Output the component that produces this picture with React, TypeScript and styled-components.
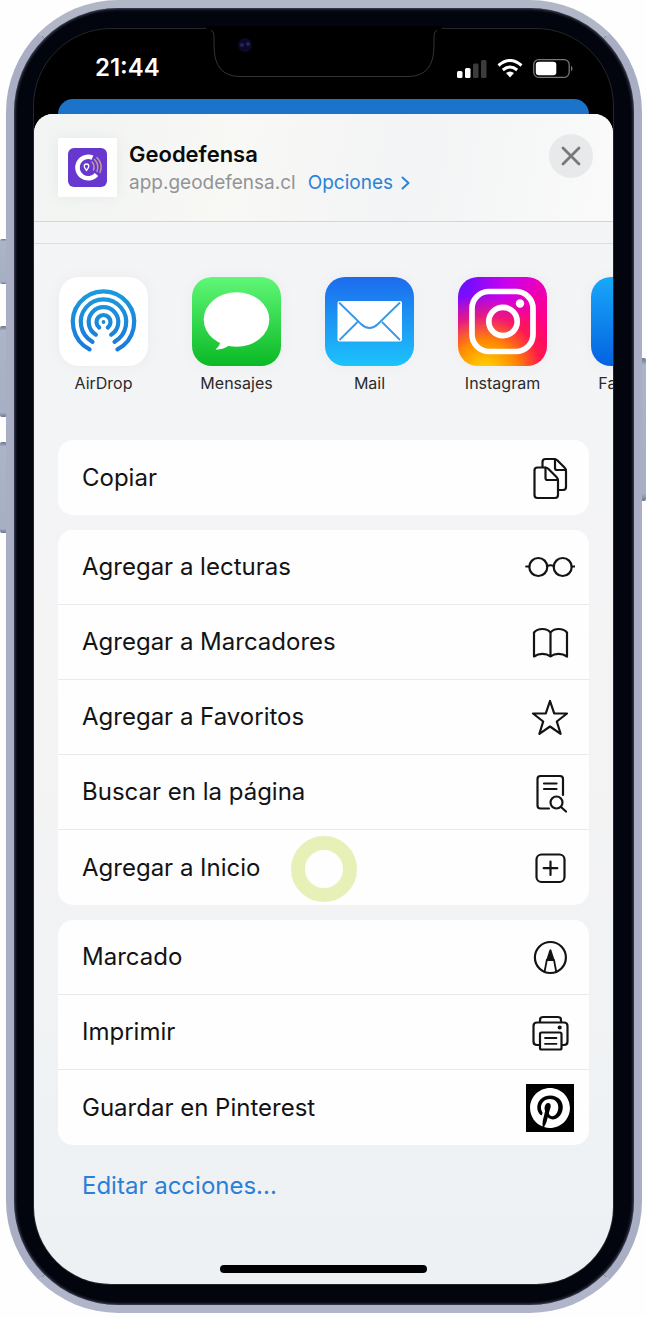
import React from 'react';
import styled, { createGlobalStyle } from 'styled-components';

const GlobalStyle = createGlobalStyle`
  *, *::before, *::after { box-sizing: border-box; }
  body {
    margin: 0;
    background: #fefefe;
    font-family: Inter, "Liberation Sans", sans-serif;
    color: #131315;
  }
  button { font: inherit; color: inherit; border: 0; background: none; cursor: pointer; }
  svg { display: block; flex: none; }
`;

const Stage = styled.main`
  position: relative;
  padding: 0 4px 5px 6px;
  overflow: hidden;
`;

const SideKey = styled.span<{ $side: 'left' | 'right'; $top: number; $length: number }>`
  position: absolute;
  ${(p) => p.$side}: 0;
  top: ${(p) => p.$top}px;
  width: ${(p) => (p.$side === 'left' ? 7 : 5)}px;
  height: ${(p) => p.$length}px;
  border-radius: 2px;
  background: linear-gradient(#6d7588, #abb5c8 5%, #a6b0c4 95%, #6d7588);
`;

const Phone = styled.div`
  position: relative;
  padding: 20px 20px 20px 19px;
  border: 8px solid #a9aec4;
  border-top-color: #b2b7c7;
  border-bottom-color: #b0b5ca;
  border-radius: 112px;
  background: #02050d;
  box-shadow: inset 0 0 3px 1px #4b5064;
`;

const Screen = styled.div`
  position: relative;
  border: 1px solid #25262a;
  border-radius: 78px;
  background: #000;
  overflow: hidden;
`;

const Notch = styled.svg`
  position: absolute;
  top: 10px;
  left: 50%;
  margin-left: -124px;
`;

const StatusBar = styled.div`
  display: flex;
  align-items: center;
  justify-content: space-between;
  height: 70px;
  padding: 8px 39px 0 61px;
  color: #fff;
  font-size: 24px;
  line-height: 28px;
  font-weight: 600;
`;

const StatusIcons = styled.div`
  display: flex;
  align-items: center;
  gap: 10px;
`;

const PageBehind = styled.div`
  height: 33px;
  margin: 0 24px -18px;
  border-radius: 15px 15px 0 0;
  background: #1b74c9;
`;

const Sheet = styled.section`
  position: relative;
  border-radius: 19px 19px 0 0;
  background: linear-gradient(#f4f5f7, #f3f3f4 60%, #eff2f5 86%, #eef1f3);
  overflow: hidden;
`;

const SheetHeader = styled.header`
  display: flex;
  align-items: flex-start;
  height: 108px;
  padding: 24px 20px 0 24px;
  border-bottom: 1px solid #d3d5d8;
  background: linear-gradient(100deg, #f1f4f2, #f8f8f5 35%, #f3f4f5 65%, #f9faf9);
`;

const SiteThumb = styled.div`
  padding: 10px;
  background: #fff;
  box-shadow: 0 0 12px #e6e8e8;
`;

const SiteInfo = styled.div`
  flex: 1;
  min-width: 0;
  padding-left: 12px;
`;

const SiteTitle = styled.h1`
  margin: 2px 0 0;
  color: #0b0b0c;
  font-size: 22px;
  line-height: 28px;
  font-weight: 600;
`;

const SiteLine = styled.div`
  display: flex;
  align-items: center;
  color: #929496;
  font-size: 19px;
  line-height: 30px;
`;

const OptionsButton = styled.button`
  display: flex;
  align-items: center;
  gap: 8px;
  margin-left: 12px;
  padding: 0;
  color: #2b82d8;
`;

const CloseButton = styled.button`
  display: grid;
  place-items: center;
  width: 44px;
  height: 44px;
  margin-top: -4px;
  padding: 0;
  border-radius: 50%;
  background: #e7e9ea;
`;

const Strip = styled.div`
  height: 22px;
  border-bottom: 1px solid #dddfe1;
`;

const AppRow = styled.nav`
  display: flex;
  gap: 44px;
  height: 196px;
  padding: 33px 0 0 25px;
  overflow: hidden;
`;

const AppButton = styled.button`
  display: flex;
  flex: none;
  flex-direction: column;
  align-items: center;
  gap: 7px;
  width: 89px;
  height: 116px;
  padding: 0;
  color: #2a2b2d;
  font-size: 16px;
  line-height: 20px;
`;

const AppTile = styled.span<{ $fill: string }>`
  width: 89px;
  height: 89px;
  flex: none;
  border-radius: 20px;
  background: ${(p) => p.$fill};
  box-shadow: 0 0 14px #ebebed;
`;

const Groups = styled.div`
  display: flex;
  flex-direction: column;
  gap: 15px;
  padding: 0 24px;
`;

const Group = styled.div`
  border-radius: 15px;
  background: #fefefe;
`;

const Row = styled.button`
  position: relative;
  display: flex;
  align-items: center;
  justify-content: space-between;
  width: 100%;
  height: 75px;
  padding: 0 14px 0 24px;
  font-size: 24px;
  line-height: 32px;
  text-align: left;

  &:not(:last-child) { border-bottom: 1px solid #e9eaeb; }
`;

const TapRing = styled.span`
  position: absolute;
  left: 50%;
  top: 6px;
  width: 66px;
  height: 66px;
  margin-left: -33px;
  border: 14px solid #e7f0b7;
  border-radius: 50%;
`;

const EditButton = styled.button`
  display: block;
  margin: 25px 48px 0;
  padding: 0;
  color: #2b7fd6;
  font-size: 24px;
  line-height: 32px;
`;

const HomeBar = styled.div`
  width: 207px;
  height: 8px;
  margin: 63px auto 11px;
  border-radius: 4px;
  background: #000;
`;

const polar = (r: number, deg: number) => {
  const a = (deg * Math.PI) / 180;
  return { x: r * Math.sin(a), y: r * Math.cos(a) };
};

const ring = (r: number, deg: number) => {
  const p = polar(r, deg);
  return `M${44.5 - p.x} ${45 + p.y}A${r} ${r} 0 1 1 ${44.5 + p.x} ${45 + p.y}`;
};

const AirDropArt = () => (
  <svg width="89" height="89" viewBox="0 0 89 89" fill="none" stroke="url(#air)" strokeWidth="4.2" strokeLinecap="round">
    <defs>
      <linearGradient id="air" gradientUnits="userSpaceOnUse" x1="0" y1="13" x2="0" y2="75">
        <stop stopColor="#1c9bdd" />
        <stop offset="1" stopColor="#1b78d8" />
      </linearGradient>
    </defs>
    <path d={ring(30.7, 27)} />
    <path d={ring(22.7, 29)} />
    <path d={ring(14.8, 31)} />
    <path d={ring(7, 38)} />
    <circle cx="44.5" cy="45" r="1.9" fill="#1b88da" stroke="none" />
  </svg>
);

const MessagesArt = () => (
  <svg width="89" height="89" viewBox="0 0 89 89" fill="#fff">
    <ellipse cx="44.5" cy="42.5" rx="32.8" ry="27.3" />
    <path d="M28 62c1 4-1 7.500-4.500 10.500 6 .3 11.500-2 15-5.500z" />
  </svg>
);

const MailArt = () => (
  <svg width="89" height="89" viewBox="0 0 89 89">
    <rect x="12.500" y="24" width="64.500" height="40.500" rx="2" fill="#fff" />
    <path d="M14 25.500l22 21.500q8.500 8 17 0l22-21.500M14.500 63l18-18M75 63l-18-18" fill="none" stroke="#3b97e2" strokeWidth="1.800" />
  </svg>
);

const InstagramArt = () => (
  <svg width="89" height="89" viewBox="0 0 89 89" fill="none" stroke="#fff">
    <rect x="14" y="14.500" width="61" height="60" rx="17" strokeWidth="5.700" />
    <circle cx="45" cy="44.500" r="14.200" strokeWidth="5.700" />
    <circle cx="62" cy="26.500" r="4.200" fill="#fff" stroke="none" />
  </svg>
);

const SiteLogo = () => (
  <svg width="39" height="39" viewBox="0 0 39 39" fill="none">
    <rect width="39" height="39" rx="6" fill="#6638cf" />
    <path d="M24.500 9.600A10.800 10.800 0 1 0 28.500 26.500" stroke="#fff" strokeWidth="4.500" />
    <path d="M18.500 22.500c-1.500-2-2.300-3-2.300-4.200a2.300 2.300 0 0 1 4.600 0c0 1.200-.8 2.200-2.300 4.200z" stroke="#fff" strokeWidth="1.300" />
    <path d="M24 14q3 3 1.500 8M26.500 11.500q5 5 2.500 12M29 9.500q6.500 7 3 15" stroke="#c69a8c" strokeWidth="1.500" strokeLinecap="round" />
  </svg>
);

const Glyph = ({ children }: { children: React.ReactNode }) => (
  <svg width="50" height="50" viewBox="0 0 50 50" fill="none" stroke="#131315" strokeWidth="2.2" strokeLinecap="round" strokeLinejoin="round" aria-hidden="true">
    {children}
  </svg>
);

const CopyGlyph = () => (
  <Glyph>
    <path d="M12.500 14.500H20q2 0 3.500 1.500l8 8q1.500 1.500 1.500 3.500V42q0 3-3 3H12.500q-3 0-3-3V17.500q0-3 3-3z" />
    <path d="M20.500 14.500V25q0 2 2 2H33" />
    <path d="M17.500 14v-5q0-3 3-3H29q2 0 3.500 1.500l7 7Q41 16 41 18v16q0 3-3 3h-5" />
    <path d="M30 6v9q0 2 2 2h9" />
  </Glyph>
);

const GlassesGlyph = () => (
  <Glyph>
    <circle cx="13.300" cy="25" r="9" />
    <circle cx="37.700" cy="25" r="9" />
    <path d="M1.200 24.500h3.100M46.700 24.500h2.800M22 24q3.500-1.500 7 0" />
  </Glyph>
);

const BookGlyph = () => (
  <Glyph>
    <path d="M25.500 15.500c-2-2.500-5-3.500-8-3.500-3.500 0-6.500 1-8.500 3.500V39.500c5-3.500 12-3.500 16.500 0 4.500-3.500 11.500-3.500 16.500 0V15.500c-2-2.500-5-3.500-8.500-3.500-3 0-6 1-8 3.500zV39.500" />
  </Glyph>
);

const StarGlyph = () => (
  <Glyph>
    <path d="M25 9l4.200 12.300 12.800.2-10.200 8 3.800 12.300-10.600-7.300-10.600 7.300 3.800-12.300-10.200-8 12.800-.2z" />
  </Glyph>
);

const FindGlyph = () => (
  <Glyph>
    <path d="M24 41.500h-8.500q-3 0-3-3V12q0-3 3-3H35q3 0 3 3v16M19 16.500h12.500M19 22h12.500" />
    <circle cx="31.500" cy="35.500" r="6" />
    <path d="M36 40l5 4.500" />
  </Glyph>
);

const AddGlyph = () => (
  <Glyph>
    <rect x="11.500" y="11.500" width="28" height="27.500" rx="5" />
    <path d="M25.500 18.500v13.500M18.700 25.200h13.600" />
  </Glyph>
);

const MarkupGlyph = () => (
  <Glyph>
    <circle cx="25.400" cy="25.500" r="15.500" />
    <path d="M25.400 18.500l-3 9.500h6z" fill="#131315" />
    <path d="M22 28h7M21.800 28l-2.200 11.500M29 28l2.200 11.500" strokeWidth="1.800" />
  </Glyph>
);

const PrintGlyph = () => (
  <Glyph>
    <path d="M14.500 38H12q-3.500 0-3.500-3.500V19q0-3.500 3.500-3.500h27q3.500 0 3.500 3.500v15.500q0 3.500-3.500 3.500H37M15 15.500V13q0-3 3-3h15q3 0 3 3v2.500" />
    <rect x="15" y="25.500" width="21.500" height="17" rx="1.500" />
    <path d="M20 31h11.500M20 36.800h11.500" strokeWidth="1.800" />
    <circle cx="34.700" cy="20.500" r="1" fill="#131315" />
  </Glyph>
);

const PinterestGlyph = () => (
  <svg width="50" height="50" viewBox="0 0 50 50" aria-hidden="true">
    <rect x="1" y="1" width="48" height="48" fill="#000" />
    <path
      transform="translate(5 5) scale(1.667)"
      fill="#fff"
      d="M12.017 0C5.396 0 .029 5.367.029 11.987c0 5.079 3.158 9.417 7.618 11.162-.105-.949-.199-2.403.041-3.439.219-.937 1.406-5.957 1.406-5.957s-.359-.72-.359-1.781c0-1.663.967-2.911 2.168-2.911 1.024 0 1.518.769 1.518 1.688 0 1.029-.653 2.567-.992 3.992-.285 1.193.6 2.165 1.775 2.165 2.128 0 3.768-2.245 3.768-5.487 0-2.861-2.063-4.869-5.008-4.869-3.410 0-5.409 2.562-5.409 5.199 0 1.033.394 2.143.889 2.741.099.12.112.225.085.345-.09.375-.293 1.199-.334 1.363-.053.225-.172.271-.401.165-1.495-.69-2.433-2.878-2.433-4.646 0-3.776 2.748-7.252 7.920-7.252 4.158 0 7.392 2.967 7.392 6.923 0 4.135-2.607 7.462-6.233 7.462-1.214 0-2.354-.629-2.758-1.379l-.749 2.848c-.269 1.045-1.004 2.352-1.498 3.146 1.123.345 2.306.535 3.550.535 6.607 0 11.985-5.365 11.985-11.987C23.970 5.390 18.592.026 11.985.026z"
    />
  </svg>
);

const apps = [
  { name: 'AirDrop', fill: '#fff', art: <AirDropArt /> },
  { name: 'Mensajes', fill: 'linear-gradient(#60f777, #0ab925)', art: <MessagesArt /> },
  { name: 'Mail', fill: 'linear-gradient(#1c6bed, #1cc3fb)', art: <MailArt /> },
  {
    name: 'Instagram',
    fill: 'radial-gradient(circle at 30% 108%, #ffc800 8%, #ff8a00 28%, rgba(255, 40, 60, 0.6) 50%, rgba(255, 0, 120, 0) 68%), radial-gradient(circle at 0 5%, #5a12ff, #c800f0 38%, rgba(240, 0, 190, 0) 65%), linear-gradient(#e600c8, #ff0084 50%, #ff0058)',
    art: <InstagramArt />,
  },
  { name: 'Facebook', fill: 'linear-gradient(#18a8fa, #0462e0)', art: null },
];

const groups = [
  [{ label: 'Copiar', icon: <CopyGlyph /> }],
  [
    { label: 'Agregar a lecturas', icon: <GlassesGlyph /> },
    { label: 'Agregar a Marcadores', icon: <BookGlyph /> },
    { label: 'Agregar a Favoritos', icon: <StarGlyph /> },
    { label: 'Buscar en la página', icon: <FindGlyph /> },
    { label: 'Agregar a Inicio', icon: <AddGlyph />, tapped: true },
  ],
  [
    { label: 'Marcado', icon: <MarkupGlyph /> },
    { label: 'Imprimir', icon: <PrintGlyph /> },
    { label: 'Guardar en Pinterest', icon: <PinterestGlyph /> },
  ],
] as { label: string; icon: React.ReactNode; tapped?: boolean }[][];

export default function App() {
  return (
    <Stage>
      <GlobalStyle />
      <SideKey $side="left" $top={239} $length={45} />
      <SideKey $side="left" $top={326} $length={91} />
      <SideKey $side="left" $top={442} $length={91} />
      <SideKey $side="right" $top={358} $length={143} />
      <Phone>
        <Screen>
          <StatusBar>
            <span>21:44</span>
            <StatusIcons>
              <svg width="30" height="19" viewBox="0 0 30 19">
                <rect x="0" y="12" width="5.500" height="7" rx="1.500" fill="#fff" />
                <rect x="8" y="9" width="5.500" height="10" rx="1.500" fill="#fff" />
                <rect x="16" y="4.500" width="5.500" height="14.500" rx="1.500" fill="#3c3c3e" />
                <rect x="24" y="1" width="5.500" height="18" rx="1.500" fill="#3c3c3e" />
              </svg>
              <svg width="26" height="19" viewBox="0 0 26 19" fill="none" stroke="#fff" strokeWidth="3">
                <path d="M1.500 6.500q11.500-10 23 0M5.800 11q7.200-6 14.400 0" />
                <path d="M13 18.500l-4-4.500q4-3 8 0z" fill="#fff" stroke="none" />
              </svg>
              <svg width="41" height="19" viewBox="0 0 41 19">
                <rect x=".7" y=".7" width="35.500" height="17.600" rx="5" fill="none" stroke="#77787a" strokeWidth="1.300" />
                <rect x="2.800" y="2.800" width="20.500" height="13.400" rx="3" fill="#fff" />
                <path d="M38 6.500q3 3 0 6z" fill="#77787a" />
              </svg>
            </StatusIcons>
          </StatusBar>
          <PageBehind />
          <Sheet>
            <SheetHeader>
              <SiteThumb><SiteLogo /></SiteThumb>
              <SiteInfo>
                <SiteTitle>Geodefensa</SiteTitle>
                <SiteLine>
                  <span>app.geodefensa.cl</span>
                  <OptionsButton>
                    Opciones
                    <svg width="9" height="14" viewBox="0 0 9 14" fill="none" stroke="#2b82d8" strokeWidth="2" strokeLinecap="round" strokeLinejoin="round">
                      <path d="M1.500 1.500l6 5.500-6 5.500" />
                    </svg>
                  </OptionsButton>
                </SiteLine>
              </SiteInfo>
              <CloseButton aria-label="Cerrar">
                <svg width="20" height="20" viewBox="0 0 20 20" stroke="#77797a" strokeWidth="2.800" strokeLinecap="round">
                  <path d="M2 2l16 16M18 2L2 18" />
                </svg>
              </CloseButton>
            </SheetHeader>
            <Strip />
            <AppRow>
              {apps.map((app) => (
                <AppButton key={app.name}>
                  <AppTile $fill={app.fill}>{app.art}</AppTile>
                  {app.name}
                </AppButton>
              ))}
            </AppRow>
            <Groups>
              {groups.map((rows) => (
                <Group key={rows[0].label}>
                  {rows.map((row) => (
                    <Row key={row.label}>
                      {row.label}
                      {row.icon}
                      {row.tapped && <TapRing />}
                    </Row>
                  ))}
                </Group>
              ))}
            </Groups>
            <EditButton>Editar acciones...</EditButton>
            <HomeBar />
          </Sheet>
        </Screen>
        <Notch width="248" height="70" viewBox="0 0 248 70">
          <path d="M6 10.500q8 0 8 8V28q0 30.500 26 30.500h168q26 0 26-30.500V18.500q0-8 8-8" fill="#000" stroke="#333436" />
          <path d="M6 8h236v4H6z" fill="#000" />
          <circle cx="45" cy="27" r="7" fill="#0b0a26" />
          <circle cx="42" cy="27" r="2" fill="#26245c" />
          <circle cx="48" cy="26" r="2" fill="#26245c" />
        </Notch>
      </Phone>
    </Stage>
  );
}
